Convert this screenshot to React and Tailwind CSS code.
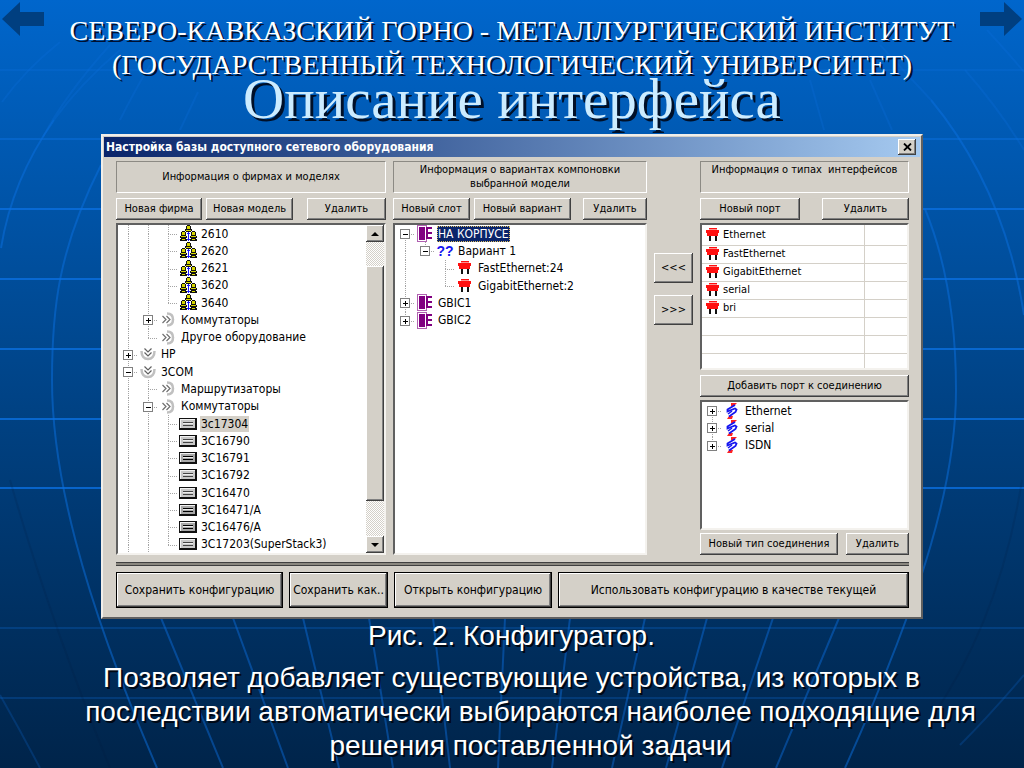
import React from "react";

const BEVEL =
  "bg-[#d4d0c8] shadow-[inset_-1px_-1px_#404040,inset_1px_1px_#ffffff,inset_-2px_-2px_#808080]";
const SUNKEN =
  "bg-white border-2 border-t-[#606060] border-l-[#606060] border-r-[#f4f2ee] border-b-[#f4f2ee]";

function Button({ className = "h-[22px]", children, ...rest }) {
  return (
    <button
      type="button"
      className={`flex items-center justify-center whitespace-nowrap ${BEVEL} ${className}`}
      {...rest}
    >
      {children}
    </button>
  );
}

function MainButton({ className = "", children }) {
  return (
    <button
      type="button"
      className={`flex h-9 items-center justify-center border border-black text-[12px] whitespace-nowrap ${BEVEL} ${className}`}
    >
      {children}
    </button>
  );
}

function PanelTitle({ className = "", children }) {
  return (
    <h3
      className={`flex h-8 justify-center border border-[#8c8a84] border-r-white border-b-white text-center leading-[14px] ${className}`}
    >
      {children}
    </h3>
  );
}

/* Icons */

function RouterIcon() {
  return (
    <svg width="17" height="17" viewBox="0 0 17 17" shapeRendering="crispEdges" aria-hidden="true">
      <path d="M6 1h1V0h3v1h1v3h1v2h-1v1H6V6H5V4h1z" fill="#111" />
      <path d="M7 1h3v3H7zM6 5h5v1H6z" fill="#d8d800" />
      <path d="M1 7h1V6h3v1h1v4h1v2H0v-2h1zM11 7h1V6h3v1h1v4h1v2h-7v-2h1z" fill="#111" />
      <path d="M2 7h3v3H2zM1 11h5v1H1zM12 7h3v3h-3zM11 11h5v1h-5z" fill="#d8d800" />
      <path d="M1 13h5v1h1v2H0v-2h1zM11 13h5v1h1v2h-7v-2h1z" fill="#111" />
      <path d="M2 14h3v1H2zM12 14h3v1h-3z" fill="#d8d800" />
      <path d="M8 7h1v9H8zM7 8h1v1H7zM9 8h1v1H9zM7 14h3v1H7z" fill="#1a1aff" />
    </svg>
  );
}

function SwitchIcon({ dark }) {
  return (
    <svg width="18" height="12" viewBox="0 0 18 12" shapeRendering="crispEdges" aria-hidden="true">
      <rect width="18" height="12" fill="#111" />
      <rect x="1" y="1" width="15" height="9" fill="#f2f2f2" />
      <rect x="2" y="2" width="14" height="8" fill={dark ? "#a8a8a8" : "#c8c8c8"} />
      <path d="M4 4h10v1H4zM4 7h10v1H4z" fill={dark ? "#000" : "#444"} />
      <path d="M4 5h10v1H4z" fill="#eee" />
    </svg>
  );
}

function TypeIcon() {
  return (
    <svg width="14" height="15" viewBox="0 0 14 15" fill="none" aria-hidden="true">
      <path d="M6 1.5C10.5 1.5 12 4 12 7.5S10.500 13.500 6 13.500" stroke="#c0c0c0" strokeWidth="2.500" />
      <path d="M1.500 4l3.500 3.500L1.500 11M5.500 4L9 7.500 5.500 11" stroke="#707070" strokeWidth="1.200" />
    </svg>
  );
}

function FirmIcon() {
  return (
    <svg width="16" height="14" viewBox="0 0 16 14" fill="none" aria-hidden="true">
      <path d="M1.500 4C1.500 9 4 12 8 12s6.500-3 6.500-8" stroke="#c0c0c0" strokeWidth="2.500" />
      <path d="M4.500 1.500L8 5l3.500-3.500M4.500 5.500L8 9l3.500-3.500" stroke="#606060" strokeWidth="1.200" />
    </svg>
  );
}

function SlotIcon() {
  return (
    <svg width="16" height="17" viewBox="0 0 16 17" shapeRendering="crispEdges" aria-hidden="true">
      <path d="M0 0h10v17H0z" fill="#b060b0" />
      <path d="M1 1h8v15H1z" fill="#fff" />
      <path d="M2 2h6v13H2z" fill="#800080" />
      <path d="M10 2h5v2h-5zM10 7h5v2h-5zM10 12h5v2h-5z" fill="#800080" />
      <path d="M9 2h2v12H9z" fill="#800080" />
    </svg>
  );
}

function PortIcon() {
  return (
    <svg width="14" height="14" viewBox="0 0 14 14" shapeRendering="crispEdges" aria-hidden="true">
      <path d="M3 0h8v2h2v3h-1v3H1V5H0V2h3z" fill="#ff1010" />
      <path d="M3 1h8v1H3z" fill="#ff9090" />
      <path d="M3 8h2v5H3zM9 8h2v5H9z" fill="#111" />
    </svg>
  );
}

function LinkIcon() {
  return (
    <svg width="12" height="16" viewBox="0 0 12 16" fill="none" aria-hidden="true">
      <path d="M5 0h6L8 3H5zM3 13h4l-1 3H1z" fill="#f22" />
      <path d="M9 2L1.500 6.500v2L9 5.500l1.500 1-1 2.500L3 13.500" stroke="#1414f0" strokeWidth="1.800" />
      <path d="M2 11l4-3" stroke="#1414f0" strokeWidth="1.500" />
    </svg>
  );
}

function VariantIcon() {
  return (
    <span className="font-['Liberation_Sans',sans-serif] text-sm leading-4 font-bold text-[#1414f0]">??</span>
  );
}

const ICONS = {
  router: <RouterIcon />,
  sw: <SwitchIcon />,
  swDark: <SwitchIcon dark />,
  type: <TypeIcon />,
  firm: <FirmIcon />,
  slot: <SlotIcon />,
  port: <PortIcon />,
  link: <LinkIcon />,
  variant: <VariantIcon />,
};

/* One guide column of a tree row.
   "|" line, "t" branch, "L" last branch, "+"/"-" node box;
   the letters a, b (box on a first / last node) trim the line above or below. */
function Guide({ kind }) {
  const box = kind[0] === "+" || kind[0] === "-";
  const up = kind !== " " && !kind.includes("a");
  const down = kind !== " " && kind !== "L" && !kind.includes("b");
  const side = box || kind === "t" || kind === "L";
  return (
    <svg
      className="h-full w-5 shrink-0"
      viewBox="0 0 20 18"
      preserveAspectRatio="xMidYMid slice"
      shapeRendering="crispEdges"
      aria-hidden="true"
    >
      <g stroke="#a4a4a4" strokeDasharray="1 1" fill="none">
        {up && <path d="M10.500 0v9" />}
        {down && <path d="M10.500 9v9" />}
        {side && <path d="M10 9.500h10" />}
      </g>
      {box && (
        <g>
          <rect x="5.500" y="4.500" width="9" height="9" fill="#fff" stroke="#808080" />
          <path d="M8 9.500h5" stroke="#000" />
          {kind[0] === "+" && <path d="M10.500 7v5" stroke="#000" />}
        </g>
      )}
    </svg>
  );
}

function Tree({ rows, label, className = "" }) {
  return (
    <ul aria-label={label} className={`grid auto-rows-fr text-[12px] ${className}`}>
      {rows.map(([guides, icon, text, state]) => (
        <li key={text + guides.join("")} className="flex min-h-0 items-center overflow-hidden">
          {guides.map((g, i) => (
            <Guide key={i} kind={g} />
          ))}
          <span className="flex w-5 shrink-0 justify-center">{ICONS[icon]}</span>
          <span
            className={`ml-0.5 px-px leading-4 whitespace-nowrap ${
              state === "active"
                ? "bg-[#0a246a] text-white outline-1 -outline-offset-1 outline-dotted outline-[#e0c060]"
                : state === "inactive"
                  ? "bg-[#d4d0c8]"
                  : ""
            }`}
          >
            {text}
          </span>
        </li>
      ))}
    </ul>
  );
}

const MODELS = [
  [["|", "|", "t"], "router", "2610"],
  [["|", "|", "t"], "router", "2620"],
  [["|", "|", "t"], "router", "2621"],
  [["|", "|", "t"], "router", "3620"],
  [["|", "|", "L"], "router", "3640"],
  [["|", "+"], "type", "Коммутаторы"],
  [["|", "L"], "type", "Другое оборудование"],
  [["+"], "firm", "HP"],
  [["-"], "firm", "3COM"],
  [["|", "t"], "type", "Маршрутизаторы"],
  [["|", "-"], "type", "Коммутаторы"],
  [["|", "|", "t"], "sw", "3c17304", "inactive"],
  [["|", "|", "t"], "sw", "3C16790"],
  [["|", "|", "t"], "swDark", "3C16791"],
  [["|", "|", "t"], "sw", "3C16792"],
  [["|", "|", "t"], "sw", "3C16470"],
  [["|", "|", "t"], "swDark", "3C16471/A"],
  [["|", "|", "t"], "swDark", "3C16476/A"],
  [["|", "|", "L"], "sw", "3C17203(SuperStack3)"],
];

const SLOTS = [
  [["-a"], "slot", "НА КОРПУСЕ", "active"],
  [["|", "-b"], "variant", "Вариант 1"],
  [["|", " ", "t"], "port", "FastEthernet:24"],
  [["|", " ", "L"], "port", "GigabitEthernet:2"],
  [["+"], "slot", "GBIC1"],
  [["+b"], "slot", "GBIC2"],
];

const LINKS = [
  [["+a"], "link", "Ethernet"],
  [["+"], "link", "serial"],
  [["+b"], "link", "ISDN"],
];

const PORTS = ["Ethernet", "FastEthernet", "GigabitEthernet", "serial", "bri", "", "", ""];

function ScrollBar() {
  return (
    <div className="flex w-[18px] shrink-0 flex-col bg-[repeating-conic-gradient(#d4d0c8_0_25%,#ffffff_0_50%)] bg-[length:2px_2px]">
      <button type="button" aria-label="Вверх" className={`flex h-[17px] items-center justify-center ${BEVEL}`}>
        <svg width="8" height="4" viewBox="0 0 8 4" aria-hidden="true">
          <path d="M4 0l4 4H0z" />
        </svg>
      </button>
      <div className={`mt-6 h-[235px] ${BEVEL}`} />
      <button type="button" aria-label="Вниз" className={`mt-auto flex h-[17px] items-center justify-center ${BEVEL}`}>
        <svg width="8" height="4" viewBox="0 0 8 4" aria-hidden="true">
          <path d="M0 0h8L4 4z" />
        </svg>
      </button>
    </div>
  );
}

function ConfigWindow() {
  return (
    <section className="mx-[101px] mt-[18px] border-2 border-t-[#f0eeea] border-r-[#606060] border-b-[#606060] border-l-[#f0eeea] bg-[#d4d0c8] p-px pb-[9px] font-['DejaVu_Sans_Condensed','DejaVu_Sans',sans-serif] text-[11px] text-black">
      <header className="flex h-5 items-center justify-between bg-linear-to-r from-[#0a246a] to-[#a6caf0] pr-1 pl-0.5">
        <h2 className="text-[12px] font-bold whitespace-nowrap text-white">
          Настройка базы доступного сетевого оборудования
        </h2>
        <button type="button" aria-label="Закрыть" className={`flex h-4 w-[18px] items-center justify-center ${BEVEL}`}>
          <svg width="9" height="8" viewBox="0 0 9 8" aria-hidden="true">
            <path d="M1 0.500l7 7M8 0.500l-7 7" stroke="#000" strokeWidth="1.800" />
          </svg>
        </button>
      </header>

      <div className="mt-1 mr-[11px] ml-3">
        <div className="grid grid-cols-[270fr_254fr_39fr_209fr] gap-x-[7px]">
          <div className="flex flex-col">
            <PanelTitle className="items-center">Информация о фирмах и моделях</PanelTitle>
            <div className="mt-[5px] flex gap-1">
              <Button className="h-[22px] w-[86px]">Новая фирма</Button>
              <Button className="h-[22px] w-[87px]">Новая модель</Button>
              <Button className="ml-auto h-[22px] w-[79px]">Удалить</Button>
            </div>
            <div className={`mt-[3px] flex h-[332px] ${SUNKEN}`}>
              <Tree label="Фирмы и модели" rows={MODELS} className="flex-1" />
              <ScrollBar />
            </div>
          </div>

          <div className="flex flex-col">
            <PanelTitle className="items-center">
              Информация о вариантах компоновки
              <br />
              выбранной модели
            </PanelTitle>
            <div className="mt-[5px] flex gap-1">
              <Button className="h-[22px] w-[77px]">Новый слот</Button>
              <Button className="h-[22px] w-[97px]">Новый вариант</Button>
              <Button className="ml-auto h-[22px] w-[64px]">Удалить</Button>
            </div>
            <div className={`mt-[3px] flex-1 ${SUNKEN}`}>
              <Tree label="Варианты компоновки" rows={SLOTS} className="h-[104px]" />
            </div>
          </div>

          <div className="flex flex-col gap-3 pt-[92px]">
            <Button className="h-[30px]">&lt;&lt;&lt;</Button>
            <Button className="h-[30px]">&gt;&gt;&gt;</Button>
          </div>

          <div className="flex flex-col">
            <PanelTitle className="items-start pt-px whitespace-pre">{"Информация о типах  интерфейсов"}</PanelTitle>
            <div className="mt-[5px] flex justify-between">
              <Button className="h-[22px] w-[100px]">Новый порт</Button>
              <Button className="h-[22px] w-[87px]">Удалить</Button>
            </div>
            <div className={`mt-[3px] h-[147px] overflow-hidden ${SUNKEN}`}>
              <table className="w-full border-collapse" aria-label="Порты">
                <tbody>
                  {PORTS.map((name, i) => (
                    <tr key={i} className="h-[18px] border-b border-[#d4d0c8] first:h-5">
                      <td className="border-r border-[#d4d0c8] p-0 pl-1">
                        {name && (
                          <span className="flex items-center gap-[3px] leading-4">
                            <PortIcon />
                            {name}
                          </span>
                        )}
                      </td>
                      <td className="w-[43px] p-0" />
                    </tr>
                  ))}
                </tbody>
              </table>
            </div>
            <Button className="mt-[5px] h-[22px]">Добавить порт к соединению</Button>
            <div className={`mt-[3px] flex-1 ${SUNKEN}`}>
              <Tree label="Типы соединений" rows={LINKS} className="h-[52px]" />
            </div>
            <div className="mt-[3px] flex justify-between">
              <Button className="h-[22px] w-[138px]">Новый тип соединения</Button>
              <Button className="h-[22px] w-[63px]">Удалить</Button>
            </div>
          </div>
        </div>

        <hr className="mt-[7px] h-1 border-y border-[#404040] bg-[#8a877f]" />

        <div className="mt-[6px] flex gap-1.5">
          <MainButton className="w-[167px]">Сохранить конфигурацию</MainButton>
          <MainButton className="w-[99px]">Сохранить как..</MainButton>
          <MainButton className="w-[158px]">Открыть конфигурацию</MainButton>
          <MainButton className="flex-1">Использовать конфигурацию в качестве текущей</MainButton>
        </div>
      </div>
    </section>
  );
}

function Backdrop() {
  return (
    <svg
      className="absolute inset-0 -z-10 h-full w-full"
      viewBox="0 0 1024 768"
      preserveAspectRatio="none"
      fill="none"
      aria-hidden="true"
    >
      <g stroke="#0a6fe0" strokeWidth="2">
        <path d="M0 70h1024" opacity=".25" />
        <path d="M0 139h1024" opacity=".5" />
        <path d="M0 209h1024M0 279h1024M0 349h1024M0 419h1024M0 488h1024" opacity=".8" />
        <path d="M0 628h1024M0 698h1024" opacity=".25" />
        <path
          d="M54 120Q12 180 1 248M101 165C58 250 52 310 52 380C52 470 80 590 157 768M931 100Q1005 190 1024 315M925 209C950 270 956 340 956 390C956 480 925 590 845 768"
          opacity=".5"
        />
        <path
          d="M161 618L223 768M233 618L288 768M303 618L339 768M369 618L393 768M433 618L450 768M505 618L498 768M570 618L552 768M645 618L612 768M707 618L666 768M773 618L722 768M839 618L776 768"
          opacity=".45"
        />
        <path
          d="M2 102Q25 70 60 42M43 137Q65 95 110 45M54 120Q80 84 120 50M120 120Q135 90 150 65M180 130L198 92M931 100L880 45M987 30Q1010 55 1024 72M965 70Q1000 110 1024 150M810 80L824 130M870 80L892 130"
          opacity=".25"
        />
      </g>
      <path d="M0 695Q20 730 40 768M1024 675Q990 715 960 745" stroke="#0a5cb8" strokeWidth="2" opacity=".3" />
      <path d="M10 480Q50 620 110 768M1022 480Q1000 620 930 720" stroke="#001a3a" strokeWidth="2" opacity=".15" />
    </svg>
  );
}

export default function App() {
  return (
    <main className="relative isolate min-h-screen overflow-hidden bg-linear-to-b from-[#0066cc] via-[#004488] to-[#00244a] pt-[14px] text-white">
      <Backdrop />
      <nav aria-label="Слайды">
        <a href="#prev" aria-label="Предыдущий слайд" className="absolute top-0.5 left-0.5">
          <svg width="42" height="34" viewBox="0 0 42 34" aria-hidden="true">
            <path d="M0 17L18 0v10h24v14H18v10z" fill="#003f80" />
          </svg>
        </a>
        <a href="#next" aria-label="Следующий слайд" className="absolute top-0.5 right-0.5">
          <svg width="42" height="34" viewBox="0 0 42 34" aria-hidden="true">
            <path d="M42 17L24 0v10H0v14h24v10z" fill="#003f80" />
          </svg>
        </a>
      </nav>

      <div className="text-center font-['Liberation_Serif',serif]">
        <p className="text-[28px] leading-[34px] text-shadow-[2px_2px_0_#001030]">
          СЕВЕРО-КАВКАЗСКИЙ ГОРНО - МЕТАЛЛУРГИЧЕСКИЙ ИНСТИТУТ
          <br />
          (ГОСУДАРСТВЕННЫЙ ТЕХНОЛОГИЧЕСКИЙ УНИВЕРСИТЕТ)
        </p>
        <h1 className="text-[57px] leading-[34px] text-[#ccecff] text-shadow-[3px_3px_0_#001028]">
          Описание интерфейса
        </h1>
      </div>

      <ConfigWindow />

      <div className="pr-[33px] pl-[70px] text-center -indent-[38px] font-['Liberation_Sans',sans-serif] text-[28px] leading-[34px] text-shadow-[2px_2px_0_#000814]">
        <p>Рис. 2. Конфигуратор.</p>
        <p className="mt-2">
          Позволяет добавляет существующие устройства, из которых в последствии автоматически
          выбираются наиболее подходящие для решения поставленной задачи
        </p>
      </div>
    </main>
  );
}
